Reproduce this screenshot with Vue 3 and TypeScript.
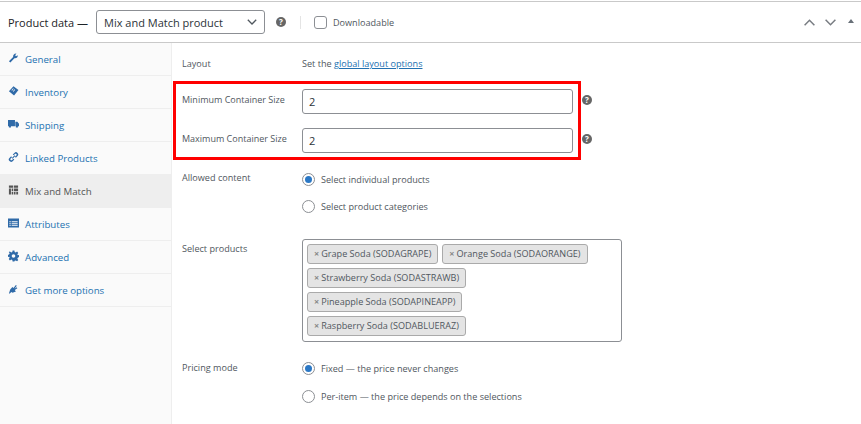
<script setup lang="ts">
interface Tab {
  label: string
  icon: string
  active?: boolean
}

const tabs: Tab[] = [
  { label: 'General', icon: 'wrench' },
  { label: 'Inventory', icon: 'tag' },
  { label: 'Shipping', icon: 'truck' },
  { label: 'Linked Products', icon: 'link' },
  { label: 'Mix and Match', icon: 'grid', active: true },
  { label: 'Attributes', icon: 'list' },
  { label: 'Advanced', icon: 'gear' },
  { label: 'Get more options', icon: 'plug' }
]

const rows: string[][] = [
  ['Grape Soda (SODAGRAPE)', 'Orange Soda (SODAORANGE)'],
  ['Strawberry Soda (SODASTRAWB)'],
  ['Pineapple Soda (SODAPINEAPP)'],
  ['Raspberry Soda (SODABLUERAZ)']
]
</script>

<template>
  <div class="panel">
    <header class="head">
      <span class="head-title">Product data —</span>
      <div class="type-select">
        <span>Mix and Match product</span>
        <svg width="10" height="6" viewBox="0 0 10 6"><path d="M.8.8 5 5 9.2.8" fill="none" stroke="#50575e" stroke-width="1.3" /></svg>
      </div>
      <span class="help head-help">?</span>
      <span class="divider"></span>
      <span class="checkbox"></span>
      <span class="check-label">Downloadable</span>
      <div class="arrows">
        <svg width="11" height="7" viewBox="0 0 11 7"><path d="M.6 6.2 5.5 1.2l4.9 5" fill="none" stroke="#787c82" stroke-width="1.5" /></svg>
        <svg width="11" height="7" viewBox="0 0 11 7"><path d="M.6.8l4.9 5 4.9-5" fill="none" stroke="#787c82" stroke-width="1.5" /></svg>
        <svg class="arrow-toggle" width="6" height="4" viewBox="0 0 6 4"><path d="M3 0 6 4H0z" fill="#687078" /></svg>
      </div>
    </header>

    <div class="body">
      <nav class="tabs">
        <a v-for="tab in tabs" :key="tab.label" class="tab" :class="{ 'tab--active': tab.active }">
          <svg class="tab-icon" width="11" height="12" viewBox="0 0 12 12">
            <path v-if="tab.icon === 'wrench'" d="M1 9.6 5.6 5C5.2 3.4 6.6 1 9.2 1.2L7.8 2.9 8.7 4.2 10.6 3C11 5 9 6.8 7 6.3L2.6 11z" />
            <path v-else-if="tab.icon === 'tag'" fill-rule="evenodd" d="M6 .8 11.4 5 6.6 10.8 1 6.4zM5.6 3 3.8 5.2l.6.5 1.8-2.2zM7.2 4.2 5.4 6.4l.6.5 1.8-2.2z" />
            <path v-else-if="tab.icon === 'truck'" d="M0 1.5h7.6v7H0zM8 3.5h2.2L12 5.6v2.9H8zM1 8.5h2.2v1.3H1zM8.6 8.5h2.2v1.3H8.6z" />
            <path v-else-if="tab.icon === 'link'" fill-rule="evenodd" d="M7 1.5a2.4 2.4 0 0 1 3.4 3.4L8.6 6.7 7.6 5.8l1.7-1.8A1.1 1.1 0 0 0 7.8 2.5L6.2 4.2 5.2 3.3zM1.6 7 3.4 5.3l1 .9-1.7 1.8a1.1 1.1 0 0 0 1.5 1.5L5.9 7.8l1 .9-1.8 1.8A2.4 2.4 0 0 1 1.6 7zM4.2 7l3-3 .8.8-3 3z" />
            <path v-else-if="tab.icon === 'grid'" d="M1 1h4.6v2.6H1zM6.4 1H11v2.6H6.4zM1 4.4h2.2V11H1zM4 4.4h1.6v3H4zM4 8.2h1.6V11H4zM6.4 4.4H11v3H6.4zM6.4 8.2h1.8V11H6.4zM9 8.2h2V11H9z" />
            <path v-else-if="tab.icon === 'list'" fill-rule="evenodd" d="M0 1h12v10H0zM1.5 4v1.2h1.5V4zM4 4v1.2h6.5V4zM1.5 6.2v1.2h1.5V6.2zM4 6.2v1.2h6.5V6.2zM1.5 8.4v1h1.5v-1zM4 8.4v1h6.5v-1z" />
            <path v-else-if="tab.icon === 'gear'" fill-rule="evenodd" d="M5 0h2l.3 1.7 1.1.5L9.9 1.2l1.3 1.4-1 1.4.5 1.1L12 5v2l-1.3.9-.5 1.1 1 1.4-1.3 1.4-1.5-1-1.1.5L7 12H5l-.3-1.7-1.1-.5-1.5 1L.8 9.4l1-1.4-.5-1.1L0 7V5l1.3-.9.5-1.1-1-1.4L2.1 1.2l1.5 1 1.1-.5zM6 4a2 2 0 1 0 0 4 2 2 0 0 0 0-4z" />
            <path v-else d="M1 11 2.4 6.6 4.8 3.8 6 5l2.6-3.4 1 .8L7 5.8l2.4-1.6.8 1-2.8 2L8.6 8.6 5 10.2 3.6 9.4 2 11z" />
          </svg>
          <span>{{ tab.label }}</span>
        </a>
      </nav>

      <main class="content">
        <div class="row row--layout">
          <label>Layout</label>
          <p>Set the <a class="link">global layout options</a></p>
        </div>

        <div class="size-group">
          <div class="row row--size">
            <label>Minimum Container Size</label>
            <div class="text-input">2</div>
            <span class="help">?</span>
          </div>
          <div class="row row--size">
            <label>Maximum Container Size</label>
            <div class="text-input">2</div>
            <span class="help">?</span>
          </div>
          <!-- red annotation drawn over the two size rows -->
          <div class="highlight"></div>
        </div>

        <div class="row row--allowed">
          <label>Allowed content</label>
          <div class="radios">
            <div class="radio-line"><span class="radio radio--on"></span>Select individual products</div>
            <div class="radio-line"><span class="radio"></span>Select product categories</div>
          </div>
        </div>

        <div class="row row--products">
          <label>Select products</label>
          <div class="chip-box">
            <div v-for="(row, i) in rows" :key="i" class="chip-row">
              <span v-for="chip in row" :key="chip" class="chip"><i>×</i>{{ chip }}</span>
            </div>
          </div>
        </div>

        <div class="row row--pricing">
          <label>Pricing mode</label>
          <div class="radios">
            <div class="radio-line"><span class="radio radio--on"></span>Fixed — the price never changes</div>
            <div class="radio-line"><span class="radio"></span>Per-item — the price depends on the selections</div>
          </div>
        </div>
      </main>
    </div>
  </div>
</template>

<style>
html,
body {
  margin: 0;
  background: #fff;
  overflow: hidden;
}
</style>

<style scoped>
.panel {
  width: 861px;
  height: 424px;
  box-sizing: border-box;
  padding-top: 1px;
  background: #fff;
  font-family: "Open Sans", "Noto Sans", sans-serif;
  font-size: 9.1px;
  color: #50575e;
  overflow: hidden;
}

.head {
  height: 42px;
  box-sizing: border-box;
  display: flex;
  align-items: center;
  padding: 0 7px 0 8px;
  border-top: 1px solid #c9c9c9;
  border-bottom: 1px solid #c9c9c9;
}

.head-title {
  width: 88px;
  flex: none;
  font-size: 11px;
  color: #1d2327;
}

.type-select {
  width: 169px;
  height: 24px;
  box-sizing: border-box;
  display: flex;
  align-items: center;
  justify-content: space-between;
  padding: 0 7px;
  border: 1px solid #8c8f94;
  border-radius: 3px;
  font-size: 11px;
  color: #2c3338;
}

.help {
  display: inline-flex;
  align-items: center;
  justify-content: center;
  width: 10px;
  height: 10px;
  flex: none;
  border-radius: 50%;
  background: #666;
  color: #fff;
  font-size: 8px;
  font-weight: 700;
  line-height: 1;
}

.head-help {
  margin-left: 11px;
}

.divider {
  width: 1px;
  height: 13px;
  background: #e4e4e4;
  margin: 0 13px 0 14px;
}

.checkbox {
  width: 13px;
  height: 13px;
  box-sizing: border-box;
  border: 1px solid #8c8f94;
  border-radius: 3px;
}

.check-label {
  margin-left: 6px;
}

.arrows {
  margin-left: auto;
  display: flex;
  align-items: center;
  gap: 10px;
}

.arrow-toggle {
  margin: 0 0 2px 2px;
}

.body {
  display: flex;
  height: 381px;
}

.tabs {
  width: 172px;
  flex: none;
  box-sizing: border-box;
  background: #fafafa;
  border-right: 1px solid #eee;
}

.tab {
  height: 33px;
  box-sizing: border-box;
  display: flex;
  align-items: center;
  padding: 0 8px;
  border-bottom: 1px solid #eee;
  color: #2271b1;
  font-size: 9.7px;
}

.tab-icon {
  fill: #2f6aa8;
  margin: 0 6px 3px 0;
  flex: none;
}

.tab--active {
  background: #eee;
  color: #555;
}

.tab--active .tab-icon {
  fill: #555;
}

.content {
  flex: 1;
  padding-left: 10px;
  min-width: 0;
}

.row {
  display: flex;
  align-items: flex-start;
}

.row label {
  width: 120px;
  flex: none;
}

.row p {
  margin: 0;
}

.link {
  color: #2271b1;
  text-decoration: underline;
}

.row--layout {
  height: 38px;
  padding-top: 14px;
  box-sizing: border-box;
}

.size-group {
  position: relative;
  padding-top: 8px;
}

.row--size {
  height: 25px;
  align-items: center;
}

.row--size + .row--size {
  margin-top: 14px;
}

.row--size label {
  font-size: 9px;
  margin-bottom: 5px;
}

.text-input {
  width: 271px;
  height: 100%;
  box-sizing: border-box;
  border: 1px solid #8c8f94;
  border-radius: 3px;
  padding: 0 6px;
  display: flex;
  align-items: center;
  font-size: 11px;
  color: #2c3338;
}

.row--size .help {
  margin: 0 0 4px 9px;
}

.highlight {
  position: absolute;
  left: -9px;
  top: 0;
  width: 408px;
  height: 79px;
  box-sizing: border-box;
  border: 3px solid #f00;
  pointer-events: none;
}

.row--allowed {
  margin-top: 18px;
}

.row--products {
  margin-top: 25px;
}

.row--products label {
  padding-top: 3px;
}

.row--pricing {
  margin-top: 19px;
}

.radios {
  display: flex;
  flex-direction: column;
  gap: 13.5px;
  padding-top: 1px;
}

.radio-line {
  display: flex;
  align-items: center;
  height: 14px;
}

.radio {
  width: 13px;
  height: 13px;
  box-sizing: border-box;
  border: 1px solid #8c8f94;
  border-radius: 50%;
  margin-right: 6px;
  display: flex;
  align-items: center;
  justify-content: center;
  flex: none;
}

.radio--on::after {
  content: "";
  width: 7px;
  height: 7px;
  border-radius: 50%;
  background: #2b78c5;
}

.chip-box {
  width: 320px;
  height: 103px;
  box-sizing: border-box;
  border: 1px solid #8c8f94;
  border-radius: 3px;
  padding: 4px;
  display: flex;
  flex-direction: column;
  gap: 4px;
}

.chip-row {
  display: flex;
  gap: 4px;
}

.chip {
  height: 20px;
  box-sizing: border-box;
  display: flex;
  align-items: center;
  padding: 0 6px;
  background: #e4e4e4;
  border: 1px solid #aaa;
  border-radius: 3px;
  font-size: 9.1px;
  color: #50575e;
  white-space: nowrap;
}

.chip i {
  font-style: normal;
  color: #888;
  font-weight: 700;
  margin-right: 2px;
}
</style>
